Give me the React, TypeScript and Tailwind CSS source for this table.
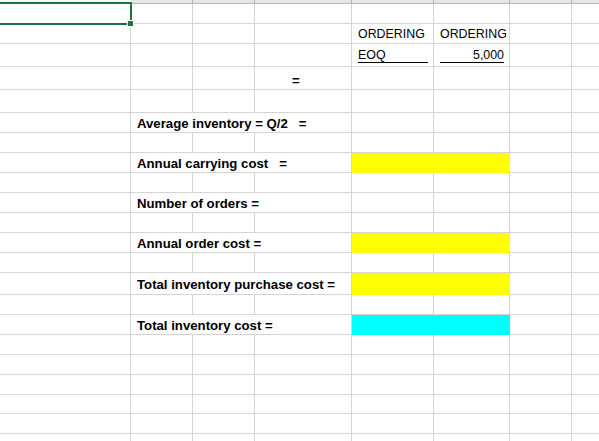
import type { ReactNode } from "react";

// column widths include the 1px gridline on the right
// A 131 | B 62 | C 62 | D 97 | E 82 | F 76 | G 62 | H 62
const font = "font-['Liberation_Sans',Arial,sans-serif]";
const grid = "border-[#d4d4d4]";

function Cell({ w, className = "", children }: { w: string; className?: string; children?: ReactNode }) {
  return (
    <div className={`flex h-full shrink-0 items-center border-r border-b pt-[2px] ${grid} ${w} ${className}`}>
      {children}
    </div>
  );
}

function Row({ h, children }: { h: string; children?: ReactNode }) {
  return <div className={`flex ${h}`}>{children}</div>;
}

function Tail() {
  return (
    <>
      <Cell w="w-[62px]" />
      <Cell w="w-[62px]" />
    </>
  );
}

function Blank({ h = "h-[20px]" }: { h?: string }) {
  return (
    <Row h={h}>
      <Cell w="w-[131px]" />
      <Cell w="w-[62px]" />
      <Cell w="w-[62px]" />
      <Cell w="w-[97px]" />
      <Cell w="w-[82px]" />
      <Cell w="w-[76px]" />
      <Tail />
    </Row>
  );
}

function Label({ text, fill, h = "h-[20px]" }: { text: string; fill?: "yellow" | "cyan"; h?: string }) {
  const bg =
    fill === "yellow"
      ? "bg-[#ffff00] border-r-[#ffff00] border-b-[#ffff00]"
      : "bg-[#00ffff] border-r-[#00ffff] border-b-[#00ffff]";
  return (
    <Row h={h}>
      <Cell w="w-[131px]" />
      <Cell w="w-[221px]">
        <span className="whitespace-pre pl-[6px] text-[13.2px] font-bold leading-none text-black">{text}</span>
      </Cell>
      {fill ? (
        <Cell w="w-[158px]" className={bg} />
      ) : (
        <>
          <Cell w="w-[82px]" />
          <Cell w="w-[76px]" />
        </>
      )}
      <Tail />
    </Row>
  );
}

export default function App() {
  return (
    <div className={`relative h-[441px] w-[599px] overflow-hidden bg-white ${font}`}>
      <div className="w-[640px]">
        {/* column header strip */}
        <div className="flex h-[4px]">
          <div className="h-full w-[131px] shrink-0 bg-white" />
          {["w-[62px]", "w-[62px]", "w-[97px]", "w-[82px]", "w-[76px]", "w-[62px]", "w-[62px]"].map((w, i) => (
            <div key={i} className={`h-full shrink-0 border-r border-b border-[#b4b4b4] bg-[#e6e6e6] ${w}`} />
          ))}
        </div>

        <Blank />

        <Row h="h-[20px]">
          <Cell w="w-[131px]" />
          <Cell w="w-[62px]" />
          <Cell w="w-[62px]" />
          <Cell w="w-[97px]" />
          <Cell w="w-[82px]">
            <span className="pl-[6px] text-[12.4px] leading-none text-black">ORDERING</span>
          </Cell>
          <Cell w="w-[76px]">
            <span className="pl-[6px] text-[12.4px] leading-none text-black">ORDERING</span>
          </Cell>
          <Tail />
        </Row>

        <Row h="h-[23px]">
          <Cell w="w-[131px]" />
          <Cell w="w-[62px]" />
          <Cell w="w-[62px]" />
          <Cell w="w-[97px]" />
          <Cell w="w-[82px]">
            <div className="ml-[6px] mr-[5px] flex-1 border-b border-black text-[12.4px] leading-none text-black">EOQ</div>
          </Cell>
          <Cell w="w-[76px]">
            <div className="ml-[6px] mr-[5px] flex-1 border-b border-black text-right text-[12.4px] leading-none text-black">
              5,000
            </div>
          </Cell>
          <Tail />
        </Row>

        <Row h="h-[23px]">
          <Cell w="w-[131px]" />
          <Cell w="w-[62px]" />
          <Cell w="w-[62px]" />
          <Cell w="w-[97px]">
            <span className="pl-[37px] pt-[3px] text-[13.2px] font-bold leading-none text-black">=</span>
          </Cell>
          <Cell w="w-[82px]" />
          <Cell w="w-[76px]" />
          <Tail />
        </Row>

        <Blank h="h-[23px]" />
        <Label text="Average inventory = Q/2   =" />
        <Blank />
        <Label text="Annual carrying cost   =" fill="yellow" />
        <Blank />
        <Label text="Number of orders =" />
        <Blank />
        <Label text="Annual order cost =" fill="yellow" />
        <Blank />
        <Label text="Total inventory purchase cost =" fill="yellow" h="h-[22px]" />
        <Blank />
        <Label text="Total inventory cost =" fill="cyan" />
        <Blank />
        <Blank />
        <Blank />
        <Blank h="h-[19px]" />
        <Blank />
        <Blank />
      </div>

      {/* active cell selection */}
      <div className="absolute left-[-3px] top-[2px] h-[23px] w-[135px] border-2 border-[#217346]" />
      <div className="absolute left-[127px] top-[20px] h-[7px] w-[7px] border border-white bg-[#217346]" />
    </div>
  );
}
